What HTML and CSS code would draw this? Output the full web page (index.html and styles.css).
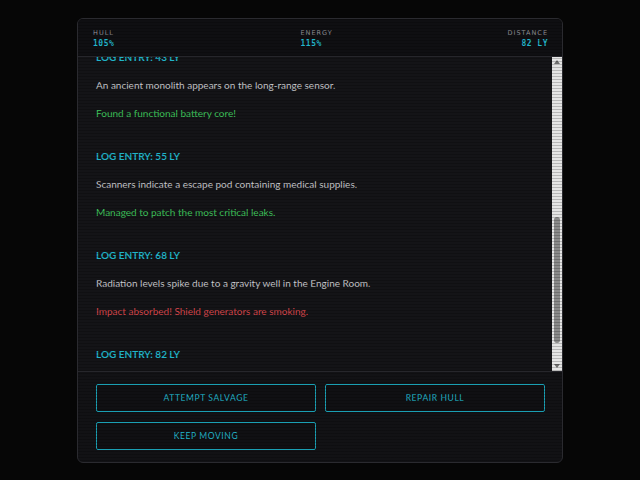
FILE: index.html
```html
<!DOCTYPE html>
<html lang="en">
<head>
  <meta charset="UTF-8">
  <meta name="viewport" content="width=device-width, initial-scale=1.0">
  <link rel="stylesheet" href="styles.css">
</head>
<body>

<div class="console">
  <div class="status-bar">
    <div class="stat">
      <span class="stat-label">Hull</span>
      <span class="stat-value">105%</span>
    </div>
    <div class="stat stat-center">
      <span class="stat-label">Energy</span>
      <span class="stat-value">115%</span>
    </div>
    <div class="stat stat-right">
      <span class="stat-label">Distance</span>
      <span class="stat-value">82 LY</span>
    </div>
  </div>

  <div class="log-frame">
    <div class="log" id="log">
      <div class="entry">
        <h3 class="entry-title">Log Entry: 0 LY</h3>
        <p class="entry-text">Systems online. The ship leaves the station and sets course for the outer rim.</p>
      </div>
      <div class="entry">
        <h3 class="entry-title">Log Entry: 9 LY</h3>
        <p class="entry-text">A small asteroid field drifts across the flight path.</p>
        <p class="entry-text good">Navigated through without a scratch.</p>
      </div>
      <div class="entry">
        <h3 class="entry-title">Log Entry: 21 LY</h3>
        <p class="entry-text">Sensors pick up a drifting cargo container.</p>
        <p class="entry-text good">Recovered spare fuel cells.</p>
      </div>
      <div class="entry">
        <h3 class="entry-title">Log Entry: 32 LY</h3>
        <p class="entry-text">A solar flare washes over the hull.</p>
        <p class="entry-text bad">Minor damage to the outer plating.</p>
      </div>
      <div class="entry" id="start-entry">
        <h3 class="entry-title">Log Entry: 43 LY</h3>
        <p class="entry-text">An ancient monolith appears on the long-range sensor.</p>
        <p class="entry-text good">Found a functional battery core!</p>
      </div>
      <div class="entry">
        <h3 class="entry-title">Log Entry: 55 LY</h3>
        <p class="entry-text">Scanners indicate a escape pod containing medical supplies.</p>
        <p class="entry-text good">Managed to patch the most critical leaks.</p>
      </div>
      <div class="entry">
        <h3 class="entry-title">Log Entry: 68 LY</h3>
        <p class="entry-text">Radiation levels spike due to a gravity well in the Engine Room.</p>
        <p class="entry-text bad">Impact absorbed! Shield generators are smoking.</p>
      </div>
      <div class="entry">
        <h3 class="entry-title">Log Entry: 82 LY</h3>
        <p class="entry-text">A derelict freighter drifts silently off the starboard bow.</p>
      </div>
    </div>

    <div class="scrollbar">
      <div class="scroll-arrow up"></div>
      <div class="scroll-track">
        <div class="scroll-thumb"></div>
      </div>
      <div class="scroll-arrow down"></div>
    </div>
  </div>

  <div class="actions">
    <button class="action-btn">Attempt Salvage</button>
    <button class="action-btn">Repair Hull</button>
    <button class="action-btn">Keep Moving</button>
  </div>
</div>

<script>
  // Scroll the log so the 43 LY entry sits at the top
  const log = document.getElementById('log');
  const startEntry = document.getElementById('start-entry');
  log.scrollTop = startEntry.offsetTop - log.offsetTop + 7;
</script>

</body>
</html>
```

FILE: styles.css
```css
body {
  background-color: #060606;
  margin: 0;
  padding-top: 18px;
  font-family: 'Lato', 'Open Sans', sans-serif;
}

.console {
  position: relative;
  width: 484px;
  margin: 0 auto;
  background-color: #121215;
  border: 1px solid #2a2a2f;
  border-radius: 6px;
  overflow: hidden;
}

/* scanlines over the whole panel */
.console::after {
  content: '';
  position: absolute;
  inset: 0;
  pointer-events: none;
  background: repeating-linear-gradient(to bottom, rgba(0, 0, 0, 0.2) 0 1px, transparent 1px 3px);
}

.status-bar {
  display: flex;
  justify-content: space-between;
  padding: 10px 14px 6px 15px;
  background-color: #0f0f12;
  border-bottom: 1px solid #26262b;
}

.stat {
  display: flex;
  flex-direction: column;
  width: 80px;
}

.stat-center {
  align-items: center;
}

.stat-center .stat-label,
.stat-center .stat-value {
  width: 40px;
}

.stat-right {
  align-items: flex-end;
}

.stat-label {
  font-family: 'DejaVu Sans', sans-serif;
  font-size: 6.5px;
  line-height: 9px;
  letter-spacing: 1px;
  text-transform: uppercase;
  color: #94949a;
}

.stat-value {
  font-family: 'DejaVu Sans Mono', monospace;
  font-weight: bold;
  font-size: 8px;
  line-height: 12px;
  letter-spacing: 0.5px;
  color: #22b5cb;
}

.log-frame {
  display: flex;
  height: 314px;
  background-color: #141417;
}

.log {
  flex: 1;
  overflow: hidden;
  padding: 14px 18px 13px;
  display: flex;
  flex-direction: column;
  gap: 29px;
}

.scrollbar {
  width: 10px;
  display: flex;
  flex-direction: column;
  background-color: #e4e4e4;
}

.scroll-arrow {
  height: 10px;
  display: flex;
  justify-content: center;
  align-items: center;
}

.scroll-arrow::before {
  content: '';
  width: 0;
  height: 0;
  border-left: 3px solid transparent;
  border-right: 3px solid transparent;
}

.scroll-arrow.up::before {
  border-bottom: 4px solid #6e6e6e;
}

.scroll-arrow.down::before {
  border-top: 4px solid #6e6e6e;
}

.scroll-track {
  flex: 1;
  display: flex;
  justify-content: center;
}

.scroll-thumb {
  width: 6px;
  height: 126px;
  margin-top: 150px;
  background-color: #8a8a8a;
  border-radius: 3px;
}

.entry {
  display: flex;
  flex-direction: column;
  gap: 14px;
  flex-shrink: 0;
}

.entry-title {
  margin: 0;
  font-size: 10px;
  line-height: 14px;
  font-weight: bold;
  text-transform: uppercase;
  color: #20b3c8;
}

.entry-text {
  margin: 0;
  font-size: 10px;
  line-height: 14px;
  color: #c8c8cc;
}

.entry-text.good {
  color: #3fc45c;
}

.entry-text.bad {
  color: #d8464b;
}

.actions {
  display: grid;
  grid-template-columns: 1fr 1fr;
  gap: 10px 9px;
  padding: 12px 17px 12px 18px;
  border-top: 1px solid #26262b;
}

.action-btn {
  height: 28px;
  background-color: #101013;
  border: 1px solid #1a9fb3;
  border-radius: 2px;
  color: #22b5cb;
  font-family: 'Lato', 'Open Sans', sans-serif;
  font-size: 8.5px;
  letter-spacing: 0.6px;
  text-transform: uppercase;
  cursor: pointer;
}
```
